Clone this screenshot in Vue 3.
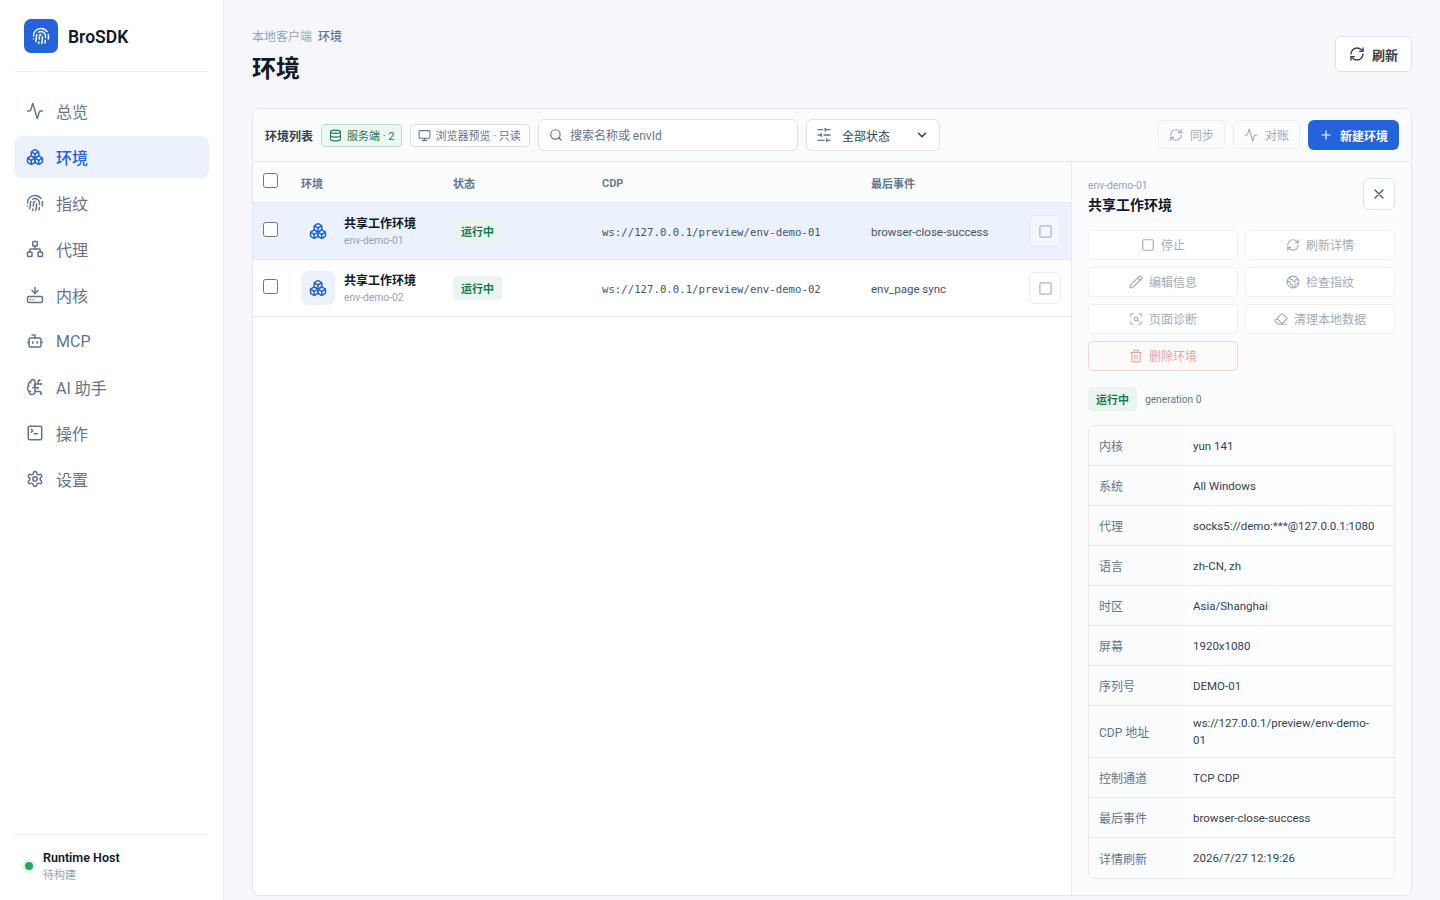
<template>
  <div class="app">
    <aside class="sidebar">
      <div class="brand">
        <span class="brand-logo">
          <svg class="ic" viewBox="0 0 24 24" width="18" height="18"><g v-html="svg.fingerprint"></g></svg>
        </span>
        <span class="brand-name">BroSDK</span>
      </div>
      <nav class="nav">
        <a v-for="n in navItems" :key="n.label" class="nav-item" :class="{ active: n.active }">
          <svg class="ic" viewBox="0 0 24 24" width="18" height="18"><g v-html="n.svg"></g></svg>
          <span>{{ n.label }}</span>
        </a>
      </nav>
      <div class="side-foot">
        <span class="dot"></span>
        <div>
          <div class="host">Runtime Host</div>
          <div class="host-sub">待构建</div>
        </div>
      </div>
    </aside>

    <main class="main">
      <header class="page-head">
        <div>
          <div class="crumbs"><span>本地客户端</span><b>环境</b></div>
          <h1>环境</h1>
        </div>
        <button class="btn btn-refresh">
          <svg class="ic" viewBox="0 0 24 24" width="16" height="16"><g v-html="svg.refresh"></g></svg>刷新
        </button>
      </header>

      <section class="card">
        <div class="toolbar">
          <span class="tb-title">环境列表</span>
          <span class="chip chip-green">
            <svg class="ic" viewBox="0 0 24 24" width="13" height="13"><g v-html="svg.database"></g></svg>服务端 · 2
          </span>
          <span class="chip">
            <svg class="ic" viewBox="0 0 24 24" width="13" height="13"><g v-html="svg.monitor"></g></svg>浏览器预览 · 只读
          </span>
          <label class="search">
            <svg class="ic" viewBox="0 0 24 24" width="14" height="14"><g v-html="svg.search"></g></svg>
            <input placeholder="搜索名称或 envId" />
          </label>
          <div class="select">
            <svg class="ic" viewBox="0 0 24 24" width="16" height="16"><g v-html="svg.sliders"></g></svg>
            <span>全部状态</span>
            <svg class="ic chev" viewBox="0 0 24 24" width="14" height="14"><path d="m6 9 6 6 6-6" /></svg>
          </div>
          <div class="tb-right">
            <button class="btn btn-ghost">
              <svg class="ic" viewBox="0 0 24 24" width="14" height="14"><g v-html="svg.refresh"></g></svg>同步
            </button>
            <button class="btn btn-ghost">
              <svg class="ic" viewBox="0 0 24 24" width="14" height="14"><g v-html="svg.activity"></g></svg>对账
            </button>
            <button class="btn btn-primary">
              <svg class="ic" viewBox="0 0 24 24" width="14" height="14"><path d="M5 12h14M12 5v14" /></svg>新建环境
            </button>
          </div>
        </div>

        <div class="body">
          <div class="list">
            <div class="row row-head">
              <span class="c-check"><input type="checkbox" /></span>
              <span class="c-env">环境</span>
              <span class="c-status">状态</span>
              <span class="c-cdp">CDP</span>
              <span class="c-event">最后事件</span>
            </div>
            <div v-for="(r, i) in rows" :key="r.id" class="row row-data" :class="{ selected: i === 0 }">
              <span class="c-check"><input type="checkbox" /></span>
              <span class="c-env env-cell">
                <span class="env-icon">
                  <svg class="ic" viewBox="0 0 24 24" width="18" height="18"><g v-html="svg.boxes"></g></svg>
                </span>
                <span>
                  <span class="env-name">共享工作环境</span>
                  <span class="env-id">{{ r.id }}</span>
                </span>
              </span>
              <span class="c-status"><span class="badge">运行中</span></span>
              <span class="c-cdp mono">{{ r.cdp }}</span>
              <span class="c-event">{{ r.event }}</span>
              <button class="row-stop">
                <svg class="ic" viewBox="0 0 24 24" width="15" height="15"><rect x="3" y="3" width="18" height="18" rx="2" /></svg>
              </button>
            </div>
          </div>

          <aside class="panel">
            <div class="panel-head">
              <div>
                <div class="panel-id">env-demo-01</div>
                <div class="panel-name">共享工作环境</div>
              </div>
              <button class="close">
                <svg class="ic" viewBox="0 0 24 24" width="16" height="16"><path d="M18 6 6 18M6 6l12 12" /></svg>
              </button>
            </div>
            <div class="actions">
              <button v-for="a in actions" :key="a.label" class="act" :class="{ danger: a.danger }">
                <svg class="ic" viewBox="0 0 24 24" width="14" height="14"><g v-html="a.svg"></g></svg>{{ a.label }}
              </button>
            </div>
            <div class="state">
              <span class="badge">运行中</span>
              <span class="gen">generation 0</span>
            </div>
            <div class="details">
              <div v-for="d in details" :key="d[0]" class="detail">
                <span class="d-key">{{ d[0] }}</span>
                <span class="d-val">{{ d[1] }}</span>
              </div>
            </div>
          </aside>
        </div>
      </section>
    </main>
  </div>
</template>

<script setup>
const svg = {
  fingerprint: '<path d="M12 10a2 2 0 0 0-2 2c0 1.02-.1 2.51-.26 4"/><path d="M14 13.12c0 2.38 0 6.38-1 8.88"/><path d="M17.29 21.02c.12-.6.43-2.3.5-3.02"/><path d="M2 12a10 10 0 0 1 18-6"/><path d="M2 16h.01"/><path d="M21.8 16c.2-2 .131-5.354 0-6"/><path d="M5 19.5C5.5 18 6 15 6 12a6 6 0 0 1 .34-2"/><path d="M8.65 22c.21-.66.45-1.32.57-2"/><path d="M9 6.8a6 6 0 0 1 9 5.2v2"/>',
  activity: '<path d="M22 12h-2.48a2 2 0 0 0-1.93 1.46l-2.35 8.36a.25.25 0 0 1-.48 0L9.24 2.18a.25.25 0 0 0-.48 0l-2.35 8.36A2 2 0 0 1 4.49 12H2"/>',
  boxes: '<path d="M2.97 12.92A2 2 0 0 0 2 14.63v3.24a2 2 0 0 0 .97 1.71l3 1.8a2 2 0 0 0 2.06 0L12 19v-5.5l-5-3-4.03 2.42Z"/><path d="m7 16.5-4.74-2.85"/><path d="m7 16.5 5-3"/><path d="M7 16.5v5.17"/><path d="M12 13.5V19l3.97 2.38a2 2 0 0 0 2.06 0l3-1.8a2 2 0 0 0 .97-1.71v-3.24a2 2 0 0 0-.97-1.71L17 10.5l-5 3Z"/><path d="m17 16.5-5-3"/><path d="m17 16.5 4.74-2.85"/><path d="M17 16.5v5.17"/><path d="M7.97 4.42A2 2 0 0 0 7 6.13v4.37l5 3 5-3V6.13a2 2 0 0 0-.97-1.71l-3-1.8a2 2 0 0 0-2.06 0l-3 1.8Z"/><path d="M12 8 7.26 5.15"/><path d="m12 8 4.74-2.85"/><path d="M12 13.5V8"/>',
  network: '<rect x="16" y="16" width="6" height="6" rx="1"/><rect x="2" y="16" width="6" height="6" rx="1"/><rect x="9" y="2" width="6" height="6" rx="1"/><path d="M5 16v-3a1 1 0 0 1 1-1h12a1 1 0 0 1 1 1v3"/><path d="M12 12V8"/>',
  drive: '<path d="M12 2v8"/><path d="m16 6-4 4-4-4"/><rect width="20" height="8" x="2" y="14" rx="2"/><path d="M6 18h.01"/><path d="M10 18h.01"/>',
  bot: '<path d="M12 8V4H8"/><rect width="16" height="12" x="4" y="8" rx="2"/><path d="M2 14h2"/><path d="M20 14h2"/><path d="M15 13v2"/><path d="M9 13v2"/>',
  brain: '<path d="M12 5a3 3 0 1 0-5.997.125 4 4 0 0 0-2.526 5.77 4 4 0 0 0 .556 6.588A4 4 0 1 0 12 18Z"/><path d="M9 13a4.5 4.5 0 0 0 3-4"/><path d="M6.003 5.125A3 3 0 0 0 6.401 6.5"/><path d="M3.477 10.896a4 4 0 0 1 .585-.396"/><path d="M6 18a4 4 0 0 1-1.967-.516"/><path d="M12 13h4"/><path d="M12 18h6a2 2 0 0 1 2 2v1"/><path d="M12 8h8"/><path d="M16 8V5a2 2 0 0 1 2-2"/><circle cx="16" cy="13" r=".5"/><circle cx="18" cy="3" r=".5"/><circle cx="20" cy="21" r=".5"/><circle cx="20" cy="8" r=".5"/>',
  terminal: '<path d="m7 11 2-2-2-2"/><path d="M11 13h4"/><rect width="18" height="18" x="3" y="3" rx="2"/>',
  settings: '<path d="M12.22 2h-.44a2 2 0 0 0-2 2v.18a2 2 0 0 1-1 1.73l-.43.25a2 2 0 0 1-2 0l-.15-.08a2 2 0 0 0-2.73.73l-.22.38a2 2 0 0 0 .73 2.73l.15.1a2 2 0 0 1 1 1.72v.51a2 2 0 0 1-1 1.74l-.15.09a2 2 0 0 0-.73 2.73l.22.38a2 2 0 0 0 2.73.73l.15-.08a2 2 0 0 1 2 0l.43.25a2 2 0 0 1 1 1.73V20a2 2 0 0 0 2 2h.44a2 2 0 0 0 2-2v-.18a2 2 0 0 1 1-1.73l.43-.25a2 2 0 0 1 2 0l.15.08a2 2 0 0 0 2.73-.73l.22-.39a2 2 0 0 0-.73-2.73l-.15-.08a2 2 0 0 1-1-1.74v-.5a2 2 0 0 1 1-1.74l.15-.09a2 2 0 0 0 .73-2.73l-.22-.38a2 2 0 0 0-2.73-.73l-.15.08a2 2 0 0 1-2 0l-.43-.25a2 2 0 0 1-1-1.73V4a2 2 0 0 0-2-2z"/><circle cx="12" cy="12" r="3"/>',
  refresh: '<path d="M3 12a9 9 0 0 1 9-9 9.75 9.75 0 0 1 6.74 2.74L21 8"/><path d="M21 3v5h-5"/><path d="M21 12a9 9 0 0 1-9 9 9.75 9.75 0 0 1-6.74-2.74L3 16"/><path d="M8 16H3v5"/>',
  database: '<ellipse cx="12" cy="5" rx="9" ry="3"/><path d="M3 5V19A9 3 0 0 0 21 19V5"/><path d="M3 12A9 3 0 0 0 21 12"/>',
  monitor: '<rect width="20" height="14" x="2" y="3" rx="2"/><path d="M8 21h8"/><path d="M12 17v4"/>',
  search: '<path d="m21 21-4.34-4.34"/><circle cx="11" cy="11" r="8"/>',
  sliders: '<path d="M21 4h-7"/><path d="M10 4H3"/><path d="M21 12h-9"/><path d="M8 12H3"/><path d="M21 20h-5"/><path d="M12 20H3"/><path d="M14 2v4"/><path d="M8 10v4"/><path d="M16 18v4"/>',
  square: '<rect width="18" height="18" x="3" y="3" rx="2"/>',
  pencil: '<path d="M21.174 6.812a1 1 0 0 0-3.986-3.987L3.842 16.174a2 2 0 0 0-.5.83l-1.321 4.352a.5.5 0 0 0 .623.622l4.353-1.32a2 2 0 0 0 .83-.497z"/><path d="m15 5 4 4"/>',
  earth: '<path d="M21.54 15H17a2 2 0 0 0-2 2v4.54"/><path d="M7 3.34V5a3 3 0 0 0 3 3a2 2 0 0 1 2 2c0 1.1.9 2 2 2a2 2 0 0 0 2-2c0-1.1.9-2 2-2h3.17"/><path d="M11 21.95V18a2 2 0 0 0-2-2a2 2 0 0 1-2-2v-1a2 2 0 0 0-2-2H2.05"/><circle cx="12" cy="12" r="10"/>',
  scan: '<path d="M3 7V5a2 2 0 0 1 2-2h2"/><path d="M17 3h2a2 2 0 0 1 2 2v2"/><path d="M21 17v2a2 2 0 0 1-2 2h-2"/><path d="M7 21H5a2 2 0 0 1-2-2v-2"/><circle cx="12" cy="12" r="3"/><path d="m16 16-1.9-1.9"/>',
  eraser: '<path d="M21 21H8a2 2 0 0 1-1.42-.587l-3.994-3.999a2 2 0 0 1 0-2.828l10-10a2 2 0 0 1 2.829 0l5.999 6a2 2 0 0 1 0 2.828L12.834 21"/><path d="m5.082 11.09 8.828 8.828"/>',
  trash: '<path d="M10 11v6"/><path d="M14 11v6"/><path d="M19 6v14a2 2 0 0 1-2 2H7a2 2 0 0 1-2-2V6"/><path d="M3 6h18"/><path d="M8 6V4a2 2 0 0 1 2-2h4a2 2 0 0 1 2 2v2"/>'
}

const navItems = [
  { label: '总览', svg: svg.activity },
  { label: '环境', svg: svg.boxes, active: true },
  { label: '指纹', svg: svg.fingerprint },
  { label: '代理', svg: svg.network },
  { label: '内核', svg: svg.drive },
  { label: 'MCP', svg: svg.bot },
  { label: 'AI 助手', svg: svg.brain },
  { label: '操作', svg: svg.terminal },
  { label: '设置', svg: svg.settings }
]

const rows = [
  { id: 'env-demo-01', cdp: 'ws://127.0.0.1/preview/env-demo-01', event: 'browser-close-success' },
  { id: 'env-demo-02', cdp: 'ws://127.0.0.1/preview/env-demo-02', event: 'env_page sync' }
]

const actions = [
  { label: '停止', svg: svg.square },
  { label: '刷新详情', svg: svg.refresh },
  { label: '编辑信息', svg: svg.pencil },
  { label: '检查指纹', svg: svg.earth },
  { label: '页面诊断', svg: svg.scan },
  { label: '清理本地数据', svg: svg.eraser },
  { label: '删除环境', svg: svg.trash, danger: true }
]

const details = [
  ['内核', 'yun 141'],
  ['系统', 'All Windows'],
  ['代理', 'socks5://demo:***@127.0.0.1:1080'],
  ['语言', 'zh-CN, zh'],
  ['时区', 'Asia/Shanghai'],
  ['屏幕', '1920x1080'],
  ['序列号', 'DEMO-01'],
  ['CDP 地址', 'ws://127.0.0.1/preview/env-demo-01'],
  ['控制通道', 'TCP CDP'],
  ['最后事件', 'browser-close-success'],
  ['详情刷新', '2026/7/27 12:19:26']
]
</script>

<style>
html, body { margin: 0; background: #f5f7fa; }
</style>

<style scoped>
.app { display: flex; height: 900px; overflow: hidden; font-family: Roboto, "Noto Sans CJK SC", sans-serif; color: #111827; background: #f5f7fa; }
.ic { fill: none; stroke: currentColor; stroke-width: 2; stroke-linecap: round; stroke-linejoin: round; flex: none; display: block; }

.sidebar { width: 224px; flex: none; box-sizing: border-box; background: #fff; border-right: 1px solid #e5e8ee; padding: 0 14px; display: flex; flex-direction: column; }
.brand { height: 71px; border-bottom: 1px solid #eef0f4; display: flex; align-items: center; gap: 10px; padding-left: 10px; }
.brand-logo { width: 34px; height: 34px; margin-top: 1px; border-radius: 7px; background: #2563db; color: #fff; display: flex; align-items: center; justify-content: center; }
.brand-name { font-size: 17.5px; font-weight: 600; color: #111827; margin-top: 2px; }
.nav { display: flex; flex-direction: column; gap: 4px; padding-top: 18px; flex: 1; }
.nav-item { height: 42px; border-radius: 8px; display: flex; align-items: center; gap: 12px; padding-left: 12px; font-size: 16px; color: #64748b; }
.nav-item.active { background: #ebf2fe; color: #2563db; font-weight: 500; }
.side-foot { border-top: 1px solid #eef0f4; height: 66px; box-sizing: border-box; padding: 0 0 3px 11px; display: flex; align-items: center; gap: 10px; }
.dot { width: 8px; height: 8px; border-radius: 50%; background: #22a565; box-shadow: 0 0 0 3px #e6f6ee; flex: none; }
.host { font-size: 12.5px; font-weight: 600; color: #111827; line-height: 17px; }
.host-sub { font-size: 11px; color: #94a3b8; line-height: 16px; margin-top: 2px; }

.main { flex: 1; min-width: 0; padding: 0 28px; display: flex; flex-direction: column; }
.page-head { height: 108px; flex: none; display: flex; justify-content: space-between; align-items: flex-start; }
.crumbs { margin-top: 29px; font-size: 12px; line-height: 17px; color: #94a3b8; display: flex; gap: 6px; }
.crumbs b { font-weight: 500; color: #64748b; }
h1 { margin: 6px 0 0; font-size: 24px; line-height: 34px; font-weight: 700; color: #111827; }

.btn { font: inherit; display: inline-flex; align-items: center; justify-content: center; gap: 6px; border-radius: 6px; background: #fff; cursor: pointer; }
.btn-refresh { margin-top: 36px; width: 77px; height: 36px; gap: 7px; border: 1px solid #dde2ea; font-size: 13px; font-weight: 600; color: #334155; border-radius: 6px; }

.card { height: 788px; flex: none; box-sizing: border-box; background: #fff; border: 1px solid #e2e6ed; border-radius: 8px; overflow: hidden; display: flex; flex-direction: column; }
.toolbar { height: 53px; flex: none; box-sizing: border-box; background: #fafbfd; border-bottom: 1px solid #e8ebf0; padding: 0 12px; display: flex; align-items: center; gap: 8px; }
.tb-title { font-size: 12px; font-weight: 600; color: #334155; }
.chip { height: 23px; box-sizing: border-box; display: inline-flex; align-items: center; gap: 5px; padding: 0 8px 0 7px; border: 1px solid #d9dee6; border-radius: 4px; background: #fff; font-size: 11px; color: #64748b; white-space: nowrap; }
.chip-green { background: #edf8f2; border-color: #b5e0c8; color: #15794c; padding-right: 6px; }
.search { width: 260px; height: 32px; box-sizing: border-box; display: flex; align-items: center; gap: 7px; padding: 0 10px; border: 1px solid #dde2ea; border-radius: 6px; background: #fff; color: #64748b; }
.search input { border: 0; outline: 0; flex: 1; min-width: 0; padding: 2px 0 0; font: inherit; font-size: 12px; background: transparent; }
.search input::placeholder { color: #64748b; opacity: 1; }
.select { width: 134px; height: 32px; box-sizing: border-box; display: flex; align-items: center; gap: 10px; padding: 0 9px; border: 1px solid #dde2ea; border-radius: 6px; background: #fff; font-size: 12px; color: #334155; }
.select .ic { color: #64748b; }
.select .chev { margin-left: auto; color: #334155; stroke-width: 2.6; margin-right: 1px; }
.tb-right { margin-left: auto; display: flex; gap: 8px; }
.btn-ghost { width: 67px; height: 29px; padding: 0; gap: 7px; border: 1px solid #edf0f4; font-size: 12px; color: #a3abb8; background: #fbfcfd; }
.btn-primary { height: 30px; width: 91px; padding: 0; border: 0; background: #2563db; color: #fff; font-size: 12px; font-weight: 600; gap: 7px; }

.body { flex: 1; min-height: 0; display: flex; }
.list { flex: 1; min-width: 0; }
.row { display: flex; align-items: center; border-bottom: 1px solid #e8ebf0; box-sizing: border-box; position: relative; }
.row-head { height: 41px; padding-top: 1px; background: #fbfcfe; font-size: 11px; font-weight: 600; color: #64748b; }
.row-head .c-cdp { padding-top: 2px; }
.row-data { height: 57px; font-size: 11.5px; color: #475569; }
.row-data.selected { background: #ebf2fe; }
.c-check { width: 48px; flex: none; padding-left: 10px; box-sizing: border-box; display: flex; }
.c-check input { width: 15px; height: 15px; margin: 0 0 4px; }
.c-env { width: 152px; flex: none; }
.c-status { width: 149px; flex: none; }
.c-cdp { width: 269px; flex: none; }
.c-event { flex: 1; }
.row-data .c-event { padding-top: 2px; }
.mono { font-family: "DejaVu Sans Mono", monospace; font-size: 10.7px; padding-top: 2px; }
.env-cell { display: flex; align-items: center; gap: 9px; }
.env-icon { width: 34px; height: 34px; border-radius: 7px; background: #ebf2fe; color: #2563db; display: flex; align-items: center; justify-content: center; flex: none; }
.env-name { display: block; font-size: 12px; font-weight: 600; color: #111827; line-height: 18px; }
.env-id { display: block; font-size: 10.3px; color: #94a3b8; line-height: 14px; margin-top: 1px; }
.badge { display: inline-flex; align-items: center; height: 24px; padding: 0 8px; border-radius: 4px; background: #e9f5ee; color: #15794c; font-size: 11px; font-weight: 600; }
.row-stop { width: 32px; height: 32px; position: absolute; right: 10px; top: 12px; box-sizing: border-box; padding: 0; border: 1px solid #e8ebf0; border-radius: 6px; background: #fff; color: #b0b7c3; display: flex; align-items: center; justify-content: center; }
.selected .row-stop { background: #f2f6fd; }

.panel { width: 340px; flex: none; box-sizing: border-box; border-left: 1px solid #e8ebf0; background: #fbfcfe; padding: 16px; }
.panel-head { display: flex; justify-content: space-between; align-items: flex-start; height: 52px; }
.panel-id { font-size: 10.3px; color: #94a3b8; line-height: 14px; margin-top: 1px; }
.panel-name { font-size: 14px; font-weight: 600; color: #111827; line-height: 20px; margin-top: 2px; }
.close { width: 32px; height: 32px; box-sizing: border-box; padding: 0; border: 1px solid #dde2ea; border-radius: 6px; background: #fff; color: #475569; display: flex; align-items: center; justify-content: center; }
.actions { display: grid; grid-template-columns: 1fr 1fr; gap: 7px; }
.act { height: 30px; box-sizing: border-box; display: flex; align-items: center; justify-content: center; gap: 6px; font: inherit; font-size: 12px; color: #a3abb8; background: #fff; border: 1px solid #edf0f4; border-radius: 5px; padding: 0 0 1px; }
.act.danger { color: #e3a5a8; border-color: #f4d5d6; background: #fdfafa; }
.state { display: flex; align-items: center; gap: 8px; margin-top: 16px; }
.gen { font-size: 10.2px; color: #64748b; }
.details { margin-top: 14px; border: 1px solid #e8ebf0; border-radius: 5px; background: #fff; overflow: hidden; }
.detail { display: flex; min-height: 40px; box-sizing: border-box; border-bottom: 1px solid #e8ebf0; font-size: 12px; background: #fcfdfe; }
.detail:last-child { border-bottom: 0; }
.d-key { width: 94px; flex: none; box-sizing: border-box; padding-left: 10px; display: flex; align-items: center; color: #64748b; background: #fbfcfd; }
.d-val { flex: 1; font-size: 11.5px; color: #334155; line-height: 17px; padding: 9px 16px 8px 10px; align-self: center; }
</style>
